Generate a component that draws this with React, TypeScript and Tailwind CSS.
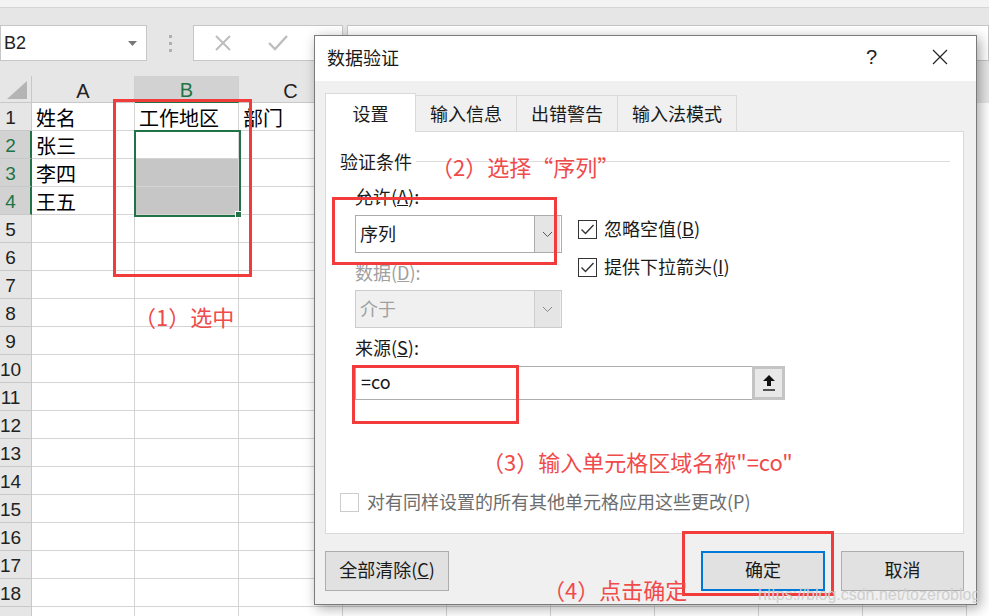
import React from 'react';

const CJK = "font-['Noto_Sans_CJK_SC',sans-serif]";
const NUM = "font-['Liberation_Sans','Noto_Sans_CJK_SC',sans-serif]";

const colLetters = ['A', 'B', 'C', 'D', 'E', 'F', 'G', 'H', 'I'];
const colWidths = ['w-[103px]', 'w-[104px]', 'w-[104px]', 'w-[104px]', 'w-[104px]', 'w-[104px]', 'w-[104px]', 'w-[104px]', 'w-[104px]'];

const cellData: Record<number, string[]> = {
    1: ['姓名', '工作地区', '部门'],
    2: ['张三'],
    3: ['李四'],
    4: ['王五'],
};

function Chevron({ color = '#555' }: { color?: string }) {
    return (
        <svg width="11" height="7" viewBox="0 0 11 7">
            <path d="M1 1 L5.5 5.5 L10 1" fill="none" stroke={color} strokeWidth="1" />
        </svg>
    );
}

function CheckBox({ checked, disabled }: { checked?: boolean; disabled?: boolean }) {
    return (
        <div className={`w-[19px] h-[19px] shrink-0 bg-white border flex items-center justify-center ${disabled ? 'border-[#cccccc]' : 'border-[#333333]'}`}>
            {checked && (
                <svg width="15" height="13" viewBox="0 0 15 13">
                    <path d="M1.5 6.5 L5.5 10.5 L13.5 2" fill="none" stroke="#333" strokeWidth="1.4" />
                </svg>
            )}
        </div>
    );
}

function Sheet() {
    const rows = Array.from({ length: 19 }, (_, i) => i + 1);
    return (
        <div className="flex flex-col">
            {/* ribbon remnant */}
            <div className="h-[8px] bg-[#f3f3f3] border-b border-[#d6d6d6]" />
            {/* name box / formula bar */}
            <div className="h-[68px] bg-[#e6e6e6] pt-[17px] flex items-start">
                <div className="w-[147px] h-[36px] bg-white border border-[#c6c6c6] flex items-center justify-between pl-[3px] pr-[9px]">
                    <span className={`${NUM} text-[18px] text-[#222]`}>B2</span>
                    <svg width="9" height="5" viewBox="0 0 9 5"><path d="M0 0 H9 L4.5 5 Z" fill="#777" /></svg>
                </div>
                <div className="w-[46px] h-[36px] flex flex-col items-center justify-center gap-[4px]">
                    <div className="w-[3px] h-[3px] bg-[#b0b0b0]" />
                    <div className="w-[3px] h-[3px] bg-[#b0b0b0]" />
                    <div className="w-[3px] h-[3px] bg-[#b0b0b0]" />
                </div>
                <div className="w-[150px] h-[36px] bg-white border border-[#c6c6c6] flex items-center pl-[20px] gap-[35px]">
                    <svg width="18" height="18" viewBox="0 0 18 18"><path d="M2 2 L16 16 M16 2 L2 16" stroke="#bdbdbd" strokeWidth="2" /></svg>
                    <svg width="22" height="18" viewBox="0 0 22 18"><path d="M2 9 L8 15 L20 2" fill="none" stroke="#bdbdbd" strokeWidth="2.4" /></svg>
                </div>
                <div className="ml-[4px] flex-1 h-[36px] bg-white border border-[#c6c6c6]" />
            </div>
            {/* column header */}
            <div className="flex h-[27px] bg-[#e6e6e6]">
                <div className="w-[32px] shrink-0 border-r border-b border-[#c8c8c8] flex items-end justify-end pr-[4px] pb-[3px]">
                    <svg width="20" height="18" viewBox="0 0 20 18"><path d="M20 0 L20 18 L0 18 Z" fill="#b4b4b4" /></svg>
                </div>
                {colLetters.map((c, i) => (
                    <div
                        key={c}
                        className={`${colWidths[i]} shrink-0 border-r border-[#cfcfcf] flex items-center justify-center pt-[3px] ${NUM} text-[20px] ${c === 'B' ? 'bg-[#d2d2d2] text-[#217346] border-b-2 border-b-[#217346]' : 'text-[#222] border-b border-b-[#c8c8c8]'}`}
                    >
                        {c}
                    </div>
                ))}
            </div>
            {/* rows */}
            {rows.map((r) => {
                const sel = r >= 2 && r <= 4;
                const data = cellData[r] || [];
                return (
                    <div key={r} className="flex h-[28px]">
                        <div className={`w-[32px] shrink-0 border-b border-[#c8c8c8] overflow-hidden ${sel ? 'bg-[#d2d2d2] text-[#217346] border-r-2 border-r-[#217346]' : 'bg-[#e6e6e6] text-[#222] border-r border-r-[#c8c8c8]'}`}>
                            <div className={`w-[21px] text-center ${NUM} text-[19px] leading-[30px]`}>{r < 19 ? r : ''}</div>
                        </div>
                        {colLetters.map((c, i) => {
                            const fill = c === 'B' && (r === 3 || r === 4);
                            return (
                                <div
                                    key={c}
                                    className={`${colWidths[i]} shrink-0 border-r border-b border-[#d4d4d4] ${fill ? 'bg-[#c6c6c6]' : 'bg-white'} ${CJK} text-[20px] leading-[30px] text-black pl-[4px] whitespace-nowrap`}
                                >
                                    {data[i] || ''}
                                </div>
                            );
                        })}
                    </div>
                );
            })}
        </div>
    );
}

function Dialog() {
    return (
        <div className={`absolute left-[314px] top-[35px] w-[663px] h-[570px] border border-[#7a7a7a] bg-[#f0f0f0] shadow-[3px_3px_12px_rgba(0,0,0,0.35)] flex flex-col ${CJK} text-[#1a1a1a]`}>
            {/* title bar */}
            <div className="h-[45px] bg-white flex items-center pl-[12px] pr-[28px] pb-[3px]">
                <span className="text-[18px]">数据验证</span>
                <span className={`ml-auto ${NUM} text-[20px] text-[#222]`}>?</span>
                <svg className="ml-[55px]" width="16" height="16" viewBox="0 0 16 16"><path d="M1 1 L15 15 M15 1 L1 15" stroke="#222" strokeWidth="1.2" /></svg>
            </div>
            <div className="flex-1 flex flex-col pl-[10px] pr-[12px] pt-[12px]">
                {/* tabs */}
                <div className="flex items-end h-[38px] text-[18px]">
                    <div className="relative z-10 mb-[-1px] w-[91px] h-[39px] bg-white border border-b-0 border-[#d9d9d9] flex items-center justify-center">设置</div>
                    <div className="w-[101px] h-[36px] bg-[#f0f0f0] border border-l-0 border-b-0 border-[#d9d9d9] flex items-center justify-center">输入信息</div>
                    <div className="w-[101px] h-[36px] bg-[#f0f0f0] border border-l-0 border-b-0 border-[#d9d9d9] flex items-center justify-center">出错警告</div>
                    <div className="w-[119px] h-[36px] bg-[#f0f0f0] border border-l-0 border-b-0 border-[#d9d9d9] flex items-center justify-center">输入法模式</div>
                </div>
                {/* panel */}
                <div className="h-[403px] bg-white border border-[#d9d9d9] flex flex-col pl-[29px] text-[18px]">
                    <div className="mt-[19px] h-[20px] flex items-center ml-[-15px] mr-[13px]">
                        <span className="leading-[18px]">验证条件</span>
                        <div className="flex-1 ml-[4px] h-px bg-[#dcdcdc]" />
                    </div>
                    <div className="mt-[17px] h-[20px] leading-[16px]">允许(<span className="underline">A</span>):</div>
                    <div className="mt-[7px] h-[38px] flex items-start">
                        <div className="w-[207px] h-[38px] shrink-0 border border-[#acacac] bg-white flex items-center">
                            <span className="pl-[4px] pb-[2px] flex-1">序列</span>
                            <div className="w-[26px] h-[36px] mr-px bg-[#e5e5e5] border-l border-[#acacac] flex items-center justify-center"><Chevron /></div>
                        </div>
                        <div className="ml-[16px] mt-[5px] flex flex-col gap-[19px]">
                            <div className="flex items-center gap-[7px] h-[19px]">
                                <CheckBox checked />
                                <span className="leading-[19px] pb-[2px]">忽略空值(<span className="underline">B</span>)</span>
                            </div>
                            <div className="flex items-center gap-[7px] h-[19px]">
                                <CheckBox checked />
                                <span className="leading-[19px] pb-[2px]">提供下拉箭头(<span className="underline">I</span>)</span>
                            </div>
                        </div>
                    </div>
                    <div className="mt-[11px] h-[20px] leading-[16px] text-[#a0a0a0]">数据(<span className="underline">D</span>):</div>
                    <div className="mt-[6px] w-[207px] h-[38px] border border-[#cccccc] bg-[#f0f0f0] flex items-center text-[#a0a0a0]">
                        <span className="pl-[4px] pb-[2px] flex-1">介于</span>
                        <div className="w-[26px] h-[36px] mr-px bg-[#e5e5e5] border-l border-[#cccccc] flex items-center justify-center"><Chevron color="#888" /></div>
                    </div>
                    <div className="mt-[11px] h-[20px] leading-[16px]">来源(<span className="underline">S</span>):</div>
                    <div className="mt-[7px] w-[430px] h-[34px] border border-[#adadad] bg-white flex items-center">
                        <span className="pl-[5px] pb-[3px] flex-1">=co</span>
                        <div className="w-[33px] h-[34px] mr-[-1px] border-[3px] border-[#c4c4c4] bg-[#e8e8e8] flex items-center justify-center">
                            <svg width="14" height="18" viewBox="0 0 14 18">
                                <path d="M7 1 L13 7 L9 7 L9 12 L5 12 L5 7 L1 7 Z" fill="#111" />
                                <path d="M1 16 H13" stroke="#111" strokeWidth="1.4" />
                            </svg>
                        </div>
                    </div>
                    <div className="mt-[93px] ml-[-15px] h-[19px] flex items-center gap-[8px] text-[#6d6d6d]">
                        <CheckBox disabled />
                        <span className="leading-[19px] pb-[2px]">对有同样设置的所有其他单元格应用这些更改(P)</span>
                    </div>
                </div>
                {/* buttons */}
                <div className="mt-[17px] flex h-[40px] text-[18px]">
                    <div className="w-[124px] h-[40px] pb-[3px] bg-[#e1e1e1] border border-[#adadad] flex items-center justify-center">全部清除(<span className="underline">C</span>)</div>
                    <div className="flex-1" />
                    <div className="w-[124px] h-[40px] pb-[3px] bg-[#e1e1e1] border-2 border-[#0078d7] flex items-center justify-center">确定</div>
                    <div className="ml-[16px] w-[123px] h-[40px] pb-[3px] bg-[#e1e1e1] border border-[#adadad] flex items-center justify-center">取消</div>
                </div>
            </div>
        </div>
    );
}

export default function App() {
    return (
        <div className="relative w-[989px] h-[616px] overflow-hidden bg-white">
            <Sheet />
            {/* selection B2:B4 */}
            <div className="absolute left-[134px] top-[130px] w-[107px] h-[87px] border-2 border-[#217346]" />
            <div className="absolute left-[235px] top-[211px] w-[7px] h-[7px] bg-[#217346] border border-white" />

            <Dialog />

            {/* annotations */}
            <div className="absolute left-[113px] top-[99px] w-[139px] h-[178px] border-[3px] border-[#f23b3b]" />
            <div className="absolute left-[332px] top-[197px] w-[225px] h-[68px] border-[3px] border-[#f23b3b]" />
            <div className="absolute left-[352px] top-[365px] w-[167px] h-[59px] border-[3px] border-[#f23b3b]" />
            <div className="absolute left-[682px] top-[531px] w-[152px] h-[65px] border-[3px] border-[#f23b3b]" />

            <div className={`absolute left-[134px] top-[305px] ${CJK} text-[22px] leading-none text-[#f04a4a] whitespace-nowrap`}>（1）选中</div>
            <div className={`absolute left-[431px] top-[155px] ${CJK} text-[22px] leading-none text-[#f04a4a] whitespace-nowrap`}>（2）选择“序列”</div>
            <div className={`absolute left-[482px] top-[450px] ${CJK} text-[22px] leading-none text-[#f04a4a] whitespace-nowrap`}>（3）输入单元格区域名称"=co"</div>
            <div className={`absolute left-[543px] top-[578px] ${CJK} text-[22px] leading-none text-[#f04a4a] whitespace-nowrap`}>（4）点击确定</div>

            <div className={`absolute left-[758px] top-[587px] ${NUM} text-[16px] leading-none text-[#cfcfcf] whitespace-nowrap`}>https://blog.csdn.net/tozeroblog</div>
        </div>
    );
}
